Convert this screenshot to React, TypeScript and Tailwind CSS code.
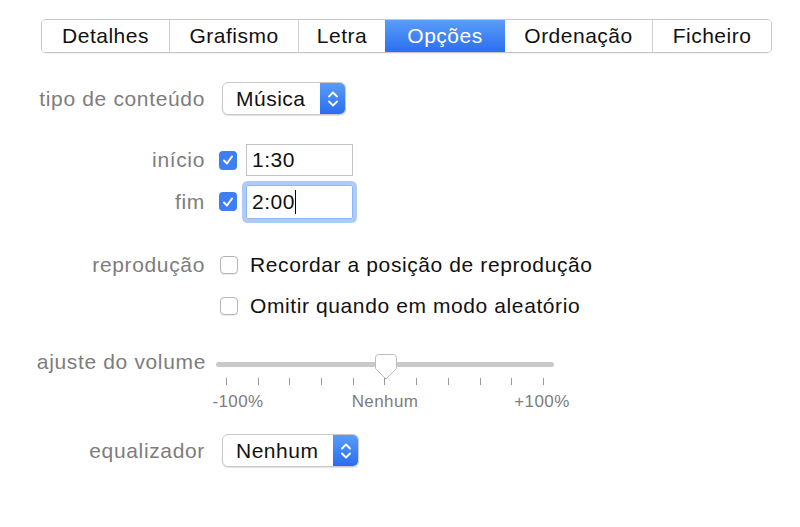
import { FC } from "react";

const tabs = [
  { label: "Detalhes", w: "w-[127px]" },
  { label: "Grafismo", w: "w-[129px]" },
  { label: "Letra", w: "w-[87px]" },
  { label: "Opções", w: "w-[120px]", active: true },
  { label: "Ordenação", w: "w-[147px]" },
  { label: "Ficheiro", w: "w-[119px]" },
];

const ticks = [0, 1, 2, 3, 4, 5, 6, 7, 8, 9, 10];

const Label: FC<{ text: string }> = ({ text }) => (
  <span className="w-[207px] pr-[2px] text-right text-[21px] tracking-[0.65px] text-[#7d7d7d] shrink-0">
    {text}
  </span>
);

const Stepper = () => (
  <div className="w-[25px] h-full bg-gradient-to-b from-[#5a9cf8] to-[#2a6cf0] rounded-r-[5px] flex items-center justify-center">
    <svg width="12" height="20" viewBox="0 0 12 20" fill="none">
      <path d="M2 7.5 L6 3.5 L10 7.5" stroke="white" strokeWidth="1.8" strokeLinecap="round" strokeLinejoin="round" />
      <path d="M2 12.5 L6 16.5 L10 12.5" stroke="white" strokeWidth="1.8" strokeLinecap="round" strokeLinejoin="round" />
    </svg>
  </div>
);

const PopUp: FC<{ value: string; w: string }> = ({ value, w }) => (
  <div className={`${w} h-[33px] flex border border-[#c9c9c9] rounded-[6px] shadow-[0_1px_1px_rgba(0,0,0,0.12)] bg-white`}>
    <span className="flex-1 pl-[13px] flex items-center text-[21px] tracking-[0.5px] text-[#111]">{value}</span>
    <Stepper />
  </div>
);

const CheckBox: FC<{ checked?: boolean }> = ({ checked }) =>
  checked ? (
    <div className="w-[18px] h-[19px] rounded-[4px] bg-[#3d7ef2] flex items-center justify-center shrink-0">
      <svg width="12" height="12" viewBox="0 0 12 12" fill="none">
        <path d="M2 6.5 L5 9.5 L10 2.5" stroke="white" strokeWidth="2" strokeLinecap="round" strokeLinejoin="round" />
      </svg>
    </div>
  ) : (
    <div className="w-[18px] h-[18px] rounded-[4px] border border-[#b5b5b5] bg-white shadow-[0_1px_1px_rgba(0,0,0,0.08)] shrink-0" />
  );

export default function App() {
  return (
    <div className="w-[800px] h-[527px] bg-white font-['Liberation_Sans',Arial,sans-serif] text-[#111] overflow-hidden">
      {/* tabs */}
      <div className="pt-[19px] pl-[41px]">
        <div className="flex w-max h-[34px] border border-[#c6c6c6] rounded-[5px] overflow-hidden shadow-[0_1px_1px_rgba(0,0,0,0.06)]">
          {tabs.map((t, i) => (
            <div
              key={t.label}
              className={`${t.w} flex items-center justify-center text-[21px] tracking-[0.5px] ${
                t.active
                  ? "bg-gradient-to-b from-[#5b9df8] to-[#2b6ef0] text-white"
                  : "bg-white text-[#111]"
              } ${i > 0 && !t.active && !tabs[i - 1].active ? "border-l border-[#cfcfcf]" : ""}`}
            >
              {t.label}
            </div>
          ))}
        </div>
      </div>

      <div className="flex flex-col">
        {/* tipo de conteudo */}
        <div className="mt-[29px] flex items-center gap-[15px] h-[33px]">
          <Label text="tipo de conteúdo" />
          <PopUp value="Música" w="w-[124px]" />
        </div>

        {/* inicio */}
        <div className="mt-[29px] flex items-center h-[32px]">
          <Label text="início" />
          <div className="ml-[12px]">
            <CheckBox checked />
          </div>
          <div className="ml-[9px] w-[107px] h-[32px] border border-[#c4c4c4] flex items-center pl-[5px] text-[21px] tracking-[0.5px]">
            1:30
          </div>
        </div>

        {/* fim */}
        <div className="mt-[9px] flex items-center h-[33px]">
          <Label text="fim" />
          <div className="ml-[12px]">
            <CheckBox checked />
          </div>
          <div className="ml-[9px] w-[107px] h-[34px] border border-[#8fb6f5] ring-[4px] ring-[#aecbf8] rounded-[2px] flex items-center pl-[5px] text-[21px] tracking-[0.5px]">
            2:00<span className="w-[1.5px] h-[24px] bg-black" />
          </div>
        </div>

        {/* reproducao */}
        <div className="mt-[32px] flex items-center h-[30px]">
          <Label text="reprodução" />
          <div className="ml-[13px]">
            <CheckBox />
          </div>
          <span className="ml-[12px] text-[21px] tracking-[0.6px]">Recordar a posição de reprodução</span>
        </div>
        <div className="mt-[11px] flex items-center h-[30px]">
          <span className="w-[207px]" />
          <div className="ml-[13px]">
            <CheckBox />
          </div>
          <span className="ml-[12px] text-[21px] tracking-[0.6px]">Omitir quando em modo aleatório</span>
        </div>

        {/* volume */}
        <div className="mt-[29px] flex items-start">
          <span className="w-[207px] pr-[1px] text-right text-[21px] tracking-[0.65px] text-[#7d7d7d] shrink-0 leading-[28px] -mt-[2px]">
            ajuste do volume
          </span>
          <div className="ml-[9px] w-[338px] flex flex-col">
            <div className="relative h-[28px] flex items-center">
              <div className="w-full h-[5px] rounded-full bg-[#c9c9c9]" />
              <svg
                className="absolute left-[159px] top-[4px]"
                width="22"
                height="26"
                viewBox="0 0 22 26"
              >
                <path
                  d="M3.5 0.5 H18.5 Q21.5 0.5 21.5 3.5 V14.5 L11 25 L0.5 14.5 V3.5 Q0.5 0.5 3.5 0.5 Z"
                  fill="white"
                  stroke="#bdbdbd"
                />
              </svg>
            </div>
            <div className="flex justify-between px-[10px] h-[8px]">
              {ticks.map((t) => (
                <span key={t} className="w-[1px] h-[7px] bg-[#9a9a9a]" />
              ))}
            </div>
            <div className="relative h-[30px] text-[17px] tracking-[0.4px] text-[#7d7d7d]">
              <span className="absolute left-[22px] top-[3px] -translate-x-1/2">-100%</span>
              <span className="absolute left-[169px] top-[3px] -translate-x-1/2">Nenhum</span>
              <span className="absolute left-[326px] top-[3px] -translate-x-1/2">+100%</span>
            </div>
          </div>
        </div>

        {/* equalizador */}
        <div className="mt-[18px] flex items-center gap-[15px] h-[33px]">
          <Label text="equalizador" />
          <PopUp value="Nenhum" w="w-[137px]" />
        </div>
      </div>
    </div>
  );
}
